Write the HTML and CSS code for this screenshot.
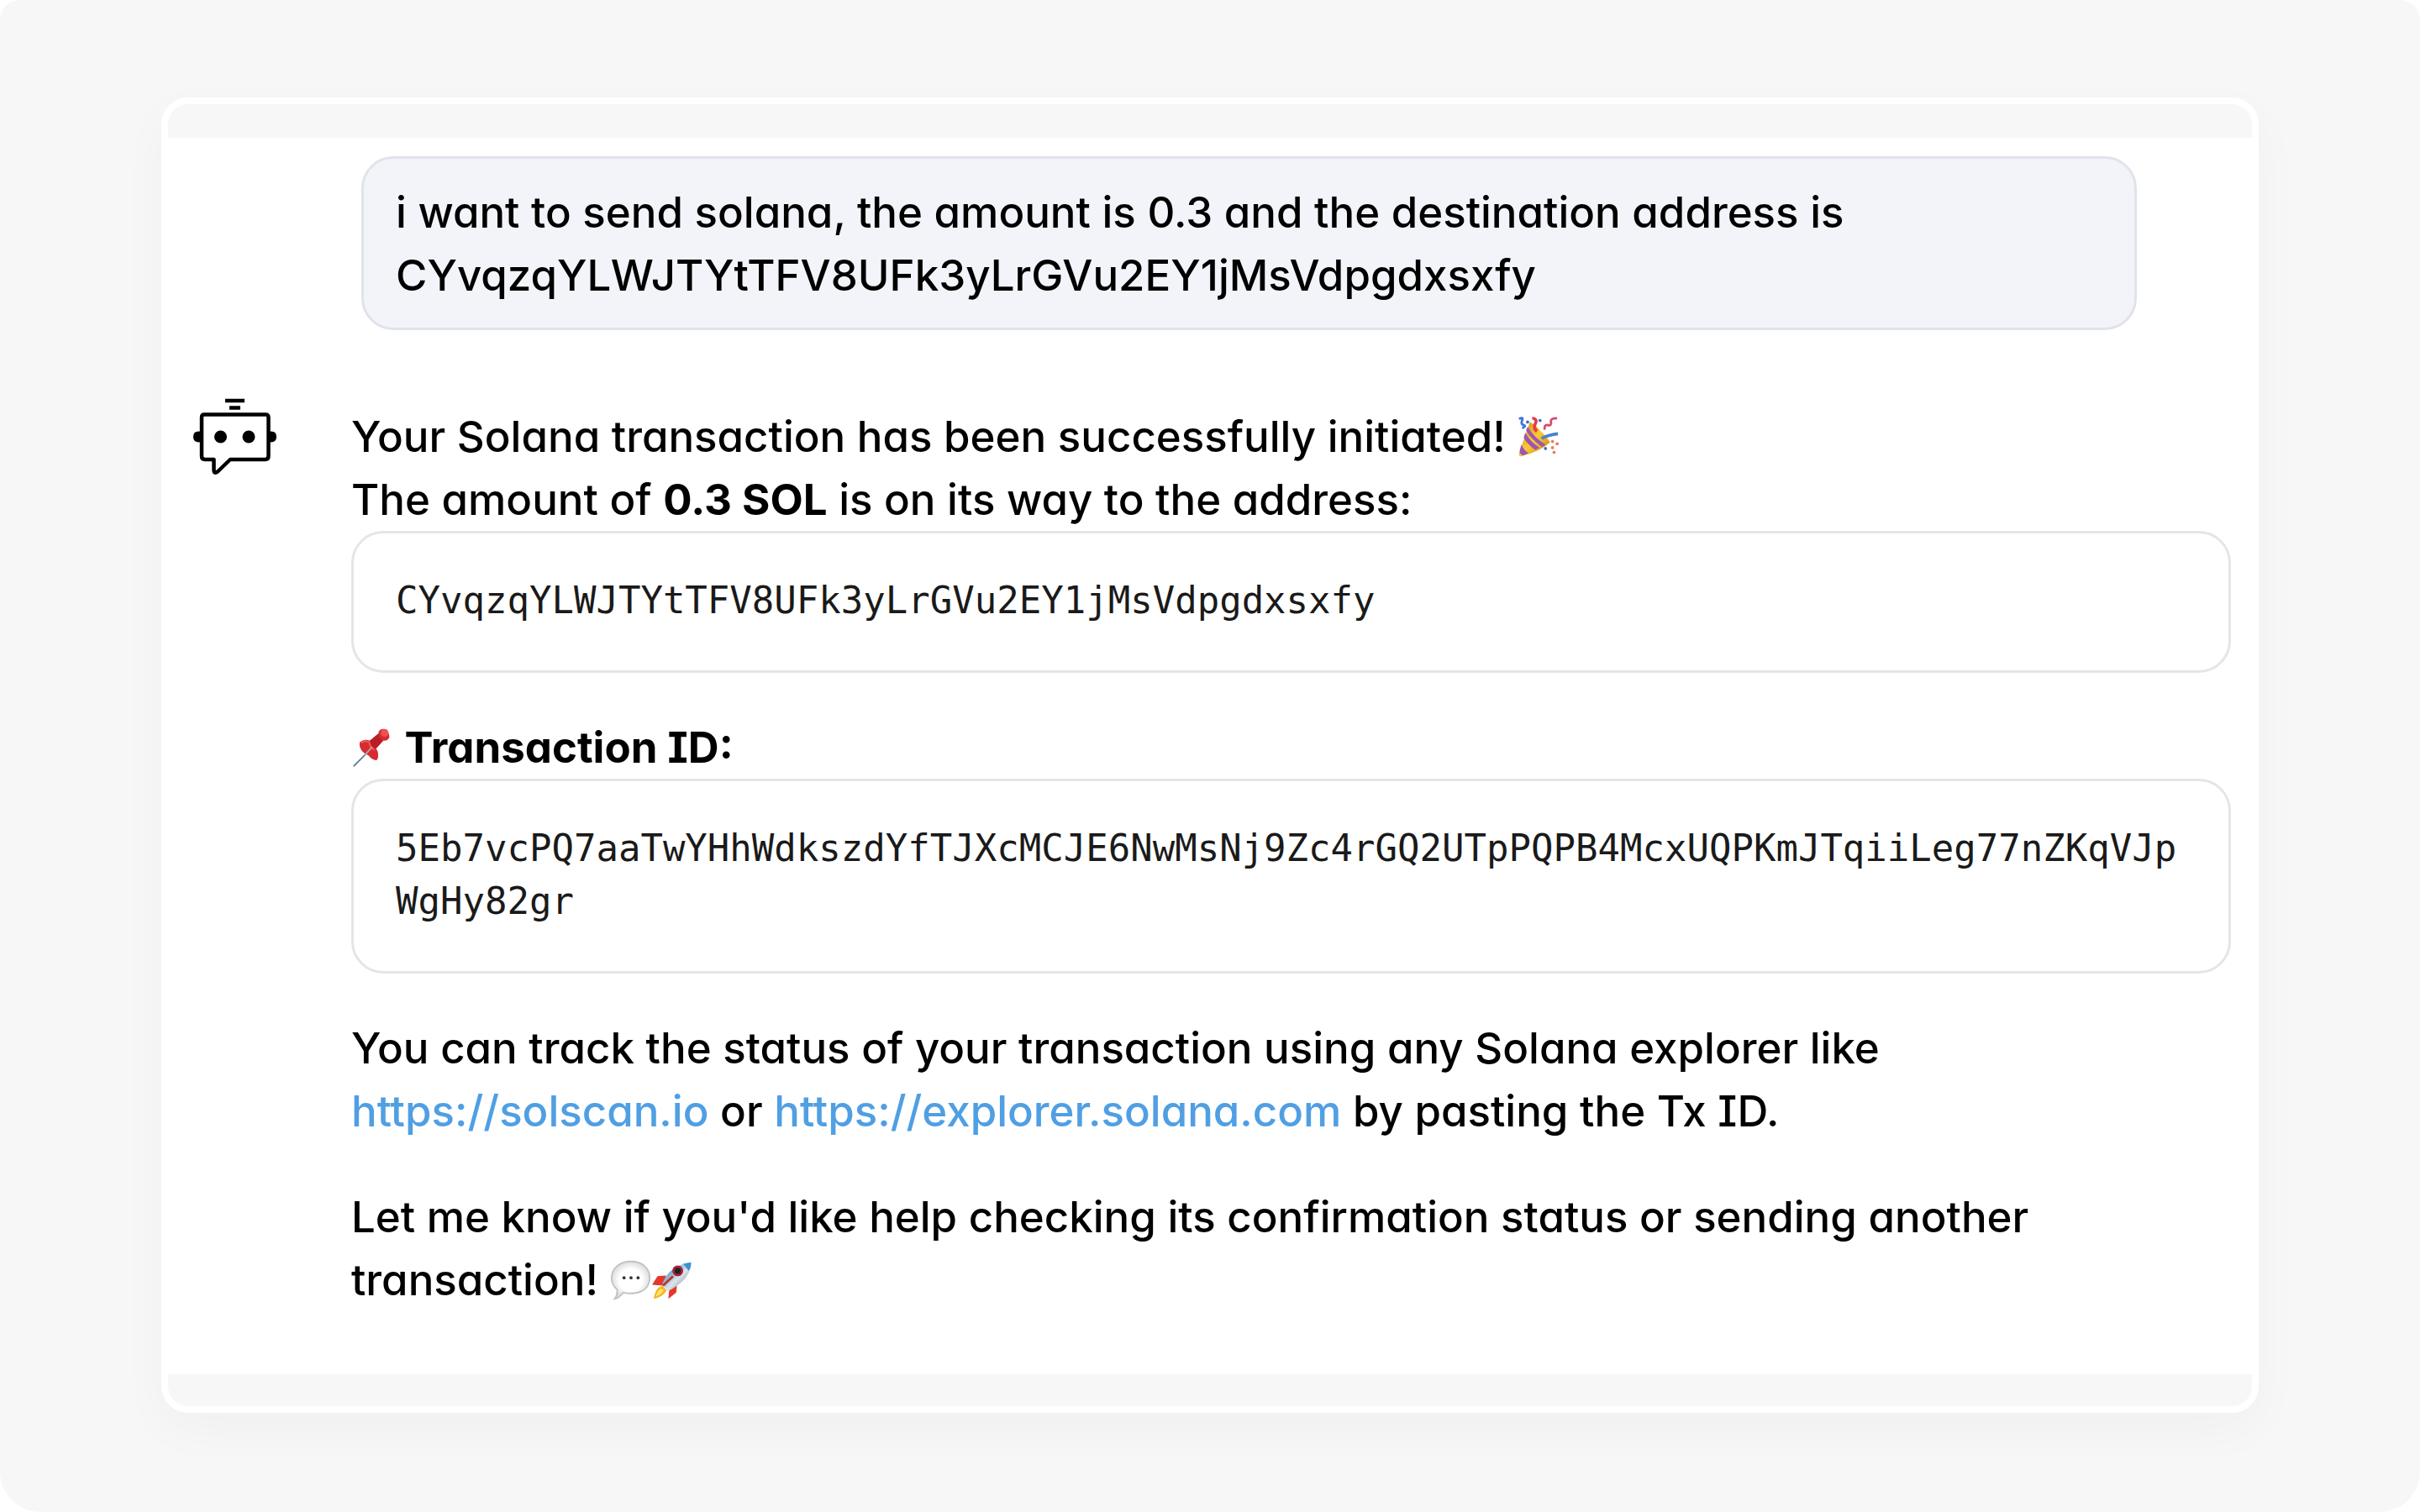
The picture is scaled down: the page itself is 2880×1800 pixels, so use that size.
FILE: index.html
```
<!DOCTYPE html>
<html lang="en">
<head>
<meta charset="utf-8">
<title>Solana transfer chat</title>
<link rel="stylesheet" href="styles.css">
</head>
<body>
<div class="page">
  <main class="card">
    <div class="chat">
      <p class="bubble">i want to send solana, the amount is 0.3 and the destination address is<br>CYvqzqYLWJTYtTFV8UFk3yLrGVu2EY1jMsVdpgdxsxfy</p>
      <article class="reply">
        <svg class="bot" viewBox="50 34 100 92" role="img" aria-label="Assistant">
          <g fill="none" stroke="#000" stroke-width="4.500" stroke-linejoin="round">
            <path d="M63 53.500H136Q139.500 53.500 139.500 57V103Q139.500 107 135.500 107H94L79 121.500Q74.500 125 74.500 119V107H64Q60 107 60 103V57Q60 53.500 63 53.500Z"/>
            <path d="M88 37H111M93 45.500H106"/>
          </g>
          <circle cx="82.500" cy="80" r="7.500"/><circle cx="116" cy="80" r="7.500"/>
          <path d="M60 74Q50 72 50 80T60 86ZM139 74Q149 72 149 80T139 86Z"/>
        </svg>
        <div class="message">
          <section>
            <p>Your Solana transaction has been successfully initiated!
              <svg class="emoji" viewBox="0 0 54 54" role="img" aria-label="Party popper">
                <defs><linearGradient id="cone" x1="0" x2="1" y1="0" y2="1"><stop offset="0" stop-color="#c98a16"/><stop offset=".5" stop-color="#fbc932"/><stop offset="1" stop-color="#c07a18"/></linearGradient></defs>
                <path d="M17 8Q25 12 30 19Q38 26 43 34Q30 46 6 52Q2 53 3 48Z" fill="url(#cone)"/>
                <path d="M11 22Q18 34 29 41L24 44Q13 36 9 28ZM6 37Q9 44 15 48L8 51Q3 49 4 44ZM14 14Q23 29 37 37L33 40Q19 31 12 19Z" fill="#9b55b5"/>
                <path d="M3 4Q9 1 7 6T9 12T7 16" fill="none" stroke="#3975dc" stroke-width="3"/>
                <path d="M20 3Q27 4 24 10T26 20" fill="none" stroke="#e8394c" stroke-width="4"/>
                <path d="M36 18Q35 11 40 12T44 8T52 3" fill="none" stroke="#d84c6b" stroke-width="3"/>
                <path d="M32 29Q42 24 53 23" fill="none" stroke="#4b7fd0" stroke-width="4"/>
                <g fill="#e77b58"><circle cx="46" cy="33" r="2"/><circle cx="52" cy="36" r="2"/><circle cx="46" cy="41" r="2"/><circle cx="48" cy="47" r="2"/></g>
                <g fill="#426bc0"><circle cx="14" cy="8" r="2"/><circle cx="30" cy="6" r="2"/><circle cx="37" cy="42" r="2"/></g>
              </svg><br>The amount of <strong>0.3 SOL</strong> is on its way to the address:</p>
            <pre class="code"><code>CYvqzqYLWJTYtTFV8UFk3yLrGVu2EY1jMsVdpgdxsxfy</code></pre>
          </section>
          <section>
            <p><svg class="emoji" viewBox="0 0 54 54" role="img" aria-label="Pushpin">
                <path d="M3 51L21 33" stroke="#65829a" stroke-width="2"/>
                <path d="M11 20Q17 15 24 18L35 9Q35 3 42 3Q49 6 49 14Q46 19 41 18L32 28Q37 36 33 43Q28 44 22 37Q9 31 11 20Z" fill="#d62b30"/>
                <path d="M24 18Q25 27 32 28L41 18Q35 15 35 9Z" fill="#b91e28"/>
                <circle cx="43" cy="8" r="5" fill="#ee5352"/>
                <path d="M13 21Q18 17 23 20Q24 27 30 30" fill="none" stroke="#f05a58" stroke-width="2"/>
                <path d="M17 37L27 26" stroke="#b5a5aa" stroke-width="2"/>
              </svg> <strong>Transaction ID:</strong></p>
            <pre class="code"><code>5Eb7vcPQ7aaTwYHhWdkszdYfTJXcMCJE6NwMsNj9Zc4rGQ2UTpPQPB4McxUQPKmJTqiiLeg77nZKqVJpWgHy82gr</code></pre>
          </section>
          <p>You can track the status of your transaction using any Solana explorer like<br><a href="https://solscan.io">https://solscan.io</a> or <a href="https://explorer.solana.com">https://explorer.solana.com</a> by pasting the Tx ID.</p>
          <p>Let me know if you'd like help checking its confirmation status or sending another<br>transaction! <svg class="emoji" viewBox="0 0 54 54" role="img" aria-label="Speech balloon">
                <defs><radialGradient id="balloon"><stop offset=".6" stop-color="#fff"/><stop offset="1" stop-color="#dedede"/></radialGradient></defs>
                <path d="M27 3C42 3 51 12 51 24S42 44 27 44Q21 44 17 43Q12 50 6 51Q10 46 9 39Q2 33 2 24C2 12 12 3 27 3Z" fill="url(#balloon)" stroke="#c2c2c2" stroke-width="2"/>
                <g fill="#333"><circle cx="18" cy="24" r="2"/><circle cx="27" cy="24" r="2"/><circle cx="36" cy="24" r="2"/></g>
              </svg><svg class="emoji" viewBox="0 0 54 54" role="img" aria-label="Rocket">
                <defs><linearGradient id="hull" x1="0" x2="1" y1="0" y2="1"><stop offset=".2" stop-color="#438fc5"/><stop offset=".55" stop-color="#dce6ec"/><stop offset="1" stop-color="#586977"/></linearGradient></defs>
                <path d="M18 21L7 22L0 33L16 34ZM22 39L32 34L31 43L21 51Z" fill="#e4372b"/>
                <path d="M13 34Q4 37 2 51Q14 49 19 40Z" fill="#f6b52b"/>
                <path d="M11 38Q6 42 5 48Q11 46 15 40Z" fill="#ffe767"/>
                <path d="M13 33Q20 9 50 4Q51 25 21 41Z" fill="url(#hull)"/>
                <path d="M40 6L50 4Q51 10 47 15Z" fill="#3f91cf"/>
                <circle cx="33" cy="15" r="7" fill="#a82431"/><circle cx="33" cy="15" r="4" fill="#24202b"/>
                <path d="M14 34L27 22" stroke="#bc332e" stroke-width="3"/>
              </svg></p>
        </div>
      </article>
    </div>
  </main>
</div>
</body>
</html>
```
FILE: styles.css
```
* { box-sizing: border-box; }
body { margin: 0; background: #fff; color: #000; font: 500 51px/75px Inter, "Liberation Sans", sans-serif; font-feature-settings: "cv11", "cv08"; }
p, pre { margin: 0; }
.page { min-height: 100vh; padding: 116px 192px; background: #f7f7f7; border-radius: 24px 24px 48px 48px; }
.card { padding: 40px 0 38px; border: 8px solid #fff; border-radius: 32px; background: #f7f7f7; box-shadow: 0 20px 60px rgba(0, 0, 0, .03); }
.chat { display: flex; flex-direction: column; gap: 81px; padding: 22px 25px 75px 30px; background: #fff; }
.bubble { margin: 0 112px 0 200px; padding: 26px 38px 25px; border: 3px solid #e0e3ea; border-radius: 38px; background: #f2f4f9; }
.reply { display: grid; grid-template-columns: 188px minmax(0, 1fr); }
.bot { width: 100px; height: 92px; }
.message { display: flex; flex-direction: column; gap: 51px; padding-top: 8px; }
strong { font-weight: 700; }
.code { padding: 48px 50px 52px; border: 3px solid #e5e5e5; border-radius: 38px; color: #1a1a1a; font: 400 44px/63px "DejaVu Sans Mono", monospace; white-space: pre-wrap; word-break: break-all; }
.code code { font: inherit; }
a { color: #509fe3; text-decoration: none; }
.emoji { width: 50px; height: 50px; vertical-align: -7px; }
```
